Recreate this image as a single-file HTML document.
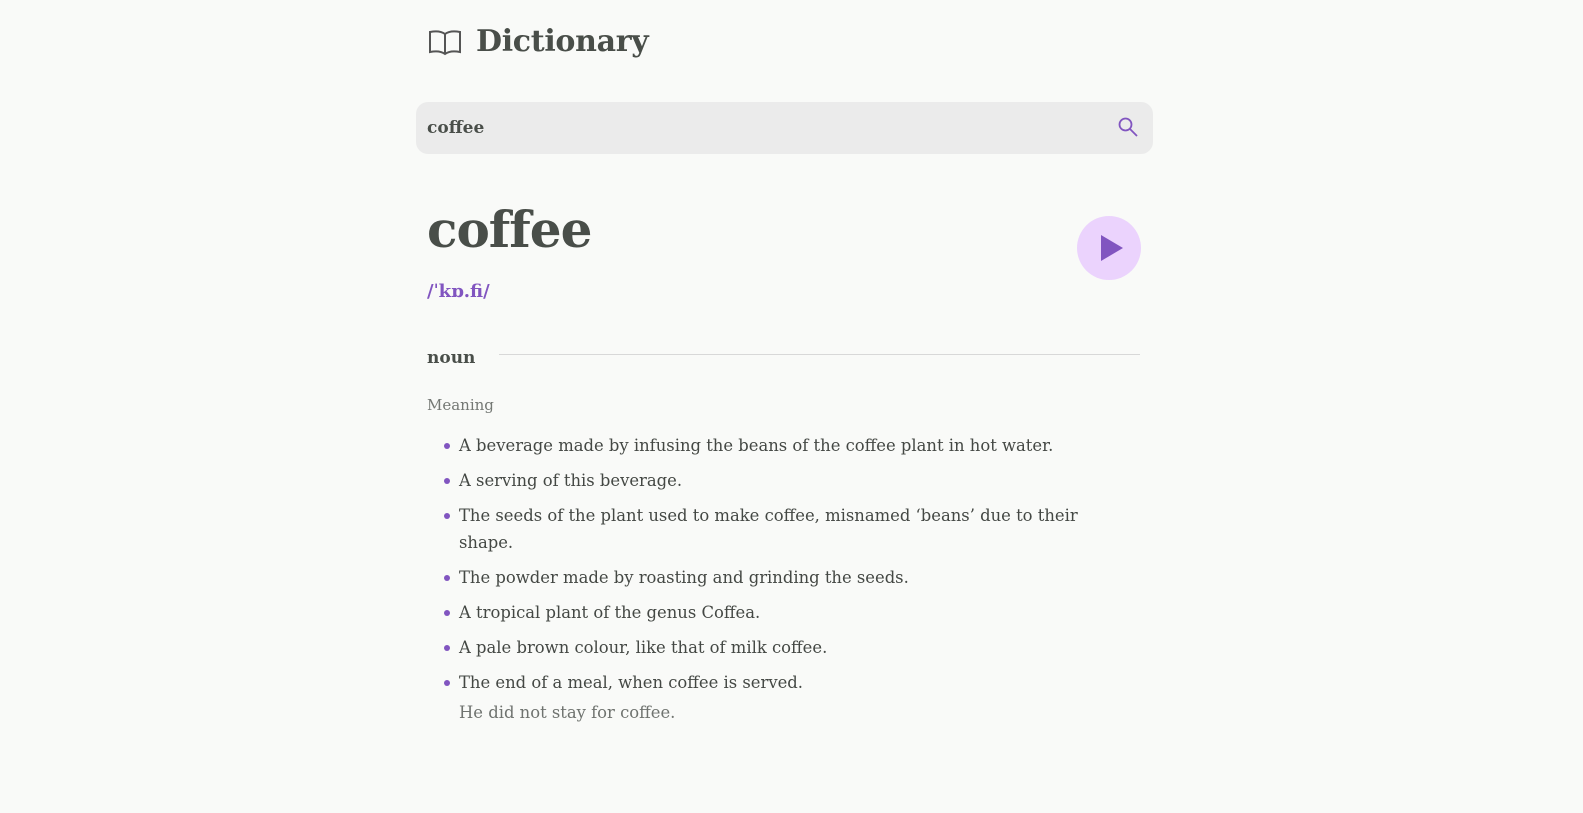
<!DOCTYPE html>
<html><head><meta charset="utf-8"><style>
*{margin:0;padding:0;box-sizing:border-box}
body{width:1583px;height:813px;overflow:hidden;background:#f9faf8;font-family:"DejaVu Serif","Liberation Serif",serif;color:#494e49}
.wrap{position:absolute;left:416px;width:737px;top:0}
.hdr{position:absolute;left:12px;top:24px;display:flex;align-items:center}
.hdr span{font-weight:bold;font-size:30px;margin-left:14px;letter-spacing:-0.3px}
.search{position:absolute;left:0;top:102px;width:737px;height:52px;background:#ebebeb;border-radius:12px}
.search span{position:absolute;left:11px;top:16px;font-weight:bold;font-size:17px}
.search svg{position:absolute;right:14px;top:14px}
.word{position:absolute;left:11px;top:200px;font-weight:bold;font-size:50px;letter-spacing:-1px}
.phon{position:absolute;left:11px;top:281px;font-size:18px;color:#8155c0;font-weight:bold}
.play{position:absolute;left:661px;top:216px;width:64px;height:64px;border-radius:50%;background:#ebd3fd}
.play i{position:absolute;left:24px;top:19px;border-left:22px solid #8155c0;border-top:13px solid transparent;border-bottom:13px solid transparent}
.pos{position:absolute;left:11px;top:348px;font-weight:bold;font-size:17px}
.line{position:absolute;left:83px;top:354px;width:641px;height:1px;background:#d8d8d8}
.mean{position:absolute;left:11px;top:396px;font-size:15px;color:#747874}
ul{position:absolute;left:43px;top:432px;width:660px;list-style:none;font-size:16.4px;line-height:27px;color:#444844}
li{position:relative;margin-bottom:8px}
li:before{content:"";position:absolute;left:-15px;top:11px;width:6px;height:6px;border-radius:50%;background:#8155c0}
.ex{color:#6f736f;margin-top:-6px;display:block;padding-top:9px}
</style></head><body>
<div class="wrap">
<div class="hdr"><svg width="34" height="28" viewBox="0 0 34 28" fill="none" stroke="#555" stroke-width="2"><path d="M17 6C13 3 7 3 2 4V24C7 23 13 23 17 26C21 23 27 23 32 24V4C27 3 21 3 17 6Z M17 6V26"/></svg><span>Dictionary</span></div>
<div class="search"><span>coffee</span><svg width="22" height="22" viewBox="0 0 22 22" fill="none" stroke="#8155c0" stroke-width="1.8"><circle cx="8.5" cy="8.5" r="6"/><path d="M13 13L20 20"/></svg></div>
<div class="word">coffee</div>
<div class="play"><i></i></div>
<div class="phon">/ˈkɒ.fi/</div>
<div class="pos">noun</div><div class="line"></div>
<div class="mean">Meaning</div>
<ul>
<li>A beverage made by infusing the beans of the coffee plant in hot water.</li>
<li>A serving of this beverage.</li>
<li>The seeds of the plant used to make coffee, misnamed ‘beans’ due to their shape.</li>
<li>The powder made by roasting and grinding the seeds.</li>
<li>A tropical plant of the genus Coffea.</li>
<li>A pale brown colour, like that of milk coffee.</li>
<li>The end of a meal, when coffee is served.<span class="ex">He did not stay for coffee.</span></li>
</ul>
</div>
</body></html>
